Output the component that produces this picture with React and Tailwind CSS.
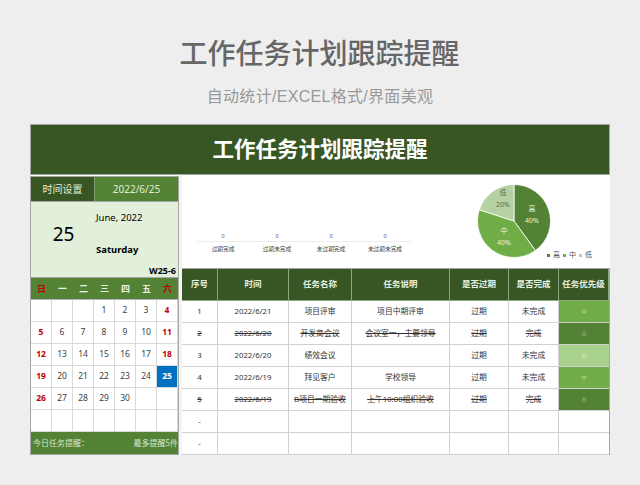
const rows = [
  ["1", "2022/6/21", "项目评审", "项目中期评审", "过期", "未完成", "中", false],
  ["2", "2022/6/20", "开发商会议", "会议室一，主要领导", "过期", "完成", "高", true],
  ["3", "2022/6/20", "绩效会议", "", "过期", "未完成", "低", false],
  ["4", "2022/6/19", "拜见客户", "学校领导", "过期", "未完成", "中", false],
  ["5", "2022/6/19", "B项目一期验收", "上午10:00组织验收", "过期", "完成", "高", true],
  ["-", "", "", "", "", "", "", false],
  ["-", "", "", "", "", "", "", false],
];
const heads = ["序号", "时间", "任务名称", "任务说明", "是否过期", "是否完成", "任务优先级"];
const weekdays = ["日", "一", "二", "三", "四", "五", "六"];
const days = ["", "", "", "1", "2", "3", "4", "5", "6", "7", "8", "9", "10", "11", "12", "13", "14", "15", "16", "17", "18", "19", "20", "21", "22", "23", "24", "25", "26", "27", "28", "29", "30", "", "", "", "", "", "", "", "", ""];
const stats = ["过期完成", "过期未完成", "未过期完成", "未过期未完成"];

function prioClass(p) {
  if (p === "中") return "bg-[#70ad47] text-[#b5d8a0]";
  if (p === "高") return "bg-[#548235] text-[#9dbb88]";
  if (p === "低") return "bg-[#a9d18e] text-[#d5e8c8]";
  return "bg-white";
}

function Pie() {
  return (
    <div className="relative w-[76px] h-[76px]">
      <svg width="76" height="76" viewBox="0 0 76 76" className="block">
        <path d="M38 38 L38 1.5 A36.5 36.5 0 0 1 59.45 67.53 Z" fill="#548235" stroke="#ffffff" strokeWidth="0.8" />
        <path d="M38 38 L59.45 67.53 A36.5 36.5 0 0 1 3.29 26.72 Z" fill="#70ad47" stroke="#ffffff" strokeWidth="0.8" />
        <path d="M38 38 L3.29 26.72 A36.5 36.5 0 0 1 38 1.5 Z" fill="#b5d1a3" stroke="#ffffff" strokeWidth="0.8" />
        <g fontSize="7" textAnchor="middle" fontFamily="'Noto Sans','Noto Sans CJK SC',sans-serif">
          <text x="56" y="28" fill="#e6efdf">高</text>
          <text x="56" y="40" fill="#e6efdf">40%</text>
          <text x="28" y="50" fill="#e8f3e0">中</text>
          <text x="28" y="62" fill="#e8f3e0">40%</text>
          <text x="27" y="12" fill="#546b46">低</text>
          <text x="27" y="24" fill="#546b46">20%</text>
        </g>
      </svg>
      <div className="absolute left-[71px] top-[67px] flex items-center gap-[3px] text-[7px] leading-[10px] text-[#555] whitespace-nowrap">
        <span className="w-[3px] h-[3px] bg-[#548235]" /><span>高</span>
        <span className="w-[3px] h-[3px] bg-[#70ad47]" /><span>中</span>
        <span className="w-[3px] h-[3px] bg-[#b5d1a3]" /><span>低</span>
      </div>
    </div>
  );
}

export default function App() {
  return (
    <div className="w-[640px] h-[485px] bg-[#eeeeee] overflow-hidden flex flex-col font-['Noto_Sans','Noto_Sans_CJK_SC',sans-serif]">
      <h1 className="mt-[35px] h-[40px] leading-[40px] text-center pr-[1px] text-[28px] font-medium text-[#666666] font-['Liberation_Sans','Noto_Sans_CJK_SC',sans-serif]">工作任务计划跟踪提醒</h1>
      <p className="mt-[11px] h-[22px] leading-[22px] text-center text-[16px] tracking-[0.3px] text-[#999999] font-['Liberation_Sans','Noto_Sans_CJK_SC',sans-serif]">自动统计/EXCEL格式/界面美观</p>
      <div className="mt-[16px] ml-[30px] w-[580px] h-[331px] flex flex-col bg-white">
        <div className="h-[51px] shrink-0 border border-[#a6a6a6] bg-[#375623] flex items-center justify-center text-[21.5px] font-bold text-white">工作任务计划跟踪提醒</div>
        <div className="flex flex-1 min-h-0">
          <div className="w-[149px] shrink-0 mt-[1px] flex flex-col border-l border-r border-b border-[#a6a6a6] text-[9px]">
            <div className="h-[25px] flex text-[#e2efda] border-t border-[#a6a6a6]">
              <div className="w-[63px] bg-[#375623] flex items-center justify-center text-[10px]">时间设置</div>
              <div className="flex-1 bg-[#548235] border-l border-[#7f9f6a] flex items-center justify-center text-[10px]">2022/6/25</div>
            </div>
            <div className="h-[76px] bg-[#e2efda] border-t border-[#a6a6a6] relative flex">
              <div className="w-[65px] flex items-center justify-center text-[19px] text-black pb-[11px]">25</div>
              <div className="flex flex-col text-black pt-[9px]">
                <div className="text-[9.5px] leading-[14px]">June, 2022</div>
                <div className="text-[9.5px] leading-[14px] font-bold mt-[18px]">Saturday</div>
              </div>
              <div className="absolute right-[2px] bottom-[0px] text-[9px] font-bold leading-[13px] text-black">W25-6</div>
            </div>
            <div className="h-[22px] grid grid-cols-7 bg-[#548235] border-t border-[#a6a6a6] text-[9px] font-bold">
              {weekdays.map((w, i) => (
                <div key={i} className={`flex items-center justify-center ${i === 0 || i === 6 ? "text-[#c00000]" : "text-[#e8f1e0]"}`}>{w}</div>
              ))}
            </div>
            <div className="grid grid-cols-7 auto-rows-[22px] bg-white border-t border-[#b5b5b5] flex-none">
              {days.map((d, i) => {
                const col = i % 7;
                const weekend = col === 0 || col === 6;
                const today = d === "25";
                return (
                  <div key={i} className={`box-border flex items-center justify-center text-[8.5px] border-b border-r border-[#d9d9d9] ${today ? "bg-[#0070c0] text-white font-bold" : weekend ? "text-[#c00000] font-bold" : "text-[#404040]"}`}>{d}</div>
                );
              })}
            </div>
            <div className="flex-1 bg-[#548235] flex items-center justify-between pl-[2px] text-[8px] text-[#d9e7cf] overflow-hidden whitespace-nowrap">
              <span>今日任务提醒：</span>
              <span>最多提醒5件</span>
            </div>
          </div>
          <div className="w-[3px] shrink-0 bg-[#f4f4f4]" />
          <div className="flex-1 min-w-0 flex flex-col">
            <div className="h-[93px] shrink-0 bg-white flex">
              <div className="ml-[14px] w-[216px] flex flex-col justify-end pb-[12px]">
                <div className="grid grid-cols-4 border-b border-[#eeeeee] text-[5.5px] leading-[10px] text-[#555] text-center">
                  {stats.map((s) => <div key={s}>0</div>)}
                </div>
                <div className="grid grid-cols-4 text-[5.7px] leading-[14px] text-[#444] text-center">
                  {stats.map((s) => <div key={s}>{s}</div>)}
                </div>
              </div>
              <div className="ml-[64px] mt-[8px]"><Pie /></div>
            </div>
            <div className="grid grid-cols-[36px_71px_63px_98px_59px_50px_50px] grid-rows-[32px_repeat(7,22px)] border-t border-r border-[#a6a6a6] w-[428px]">
              {heads.map((h) => (
                <div key={h} className="bg-[#375623] border-r border-[#8ea883] border-b flex items-center justify-center text-[8.5px] font-bold text-[#e8f1e0] whitespace-nowrap">{h}</div>
              ))}
              {rows.map((r, i) => (
                <div key={i} className="contents">
                  {r.slice(0, 6).map((c, j) => (
                    <div key={j} className={`bg-white border-r border-b border-[#d0d0d0] flex items-center justify-center text-[7.8px] text-[#333333] whitespace-nowrap ${r[7] ? "line-through" : ""}`}>{c}</div>
                  ))}
                  <div className={`${prioClass(r[6])} border-b border-[#d0d0d0] flex items-center justify-center text-[5px]`}>{r[6]}</div>
                </div>
              ))}
            </div>
          </div>
        </div>
      </div>
    </div>
  );
}
